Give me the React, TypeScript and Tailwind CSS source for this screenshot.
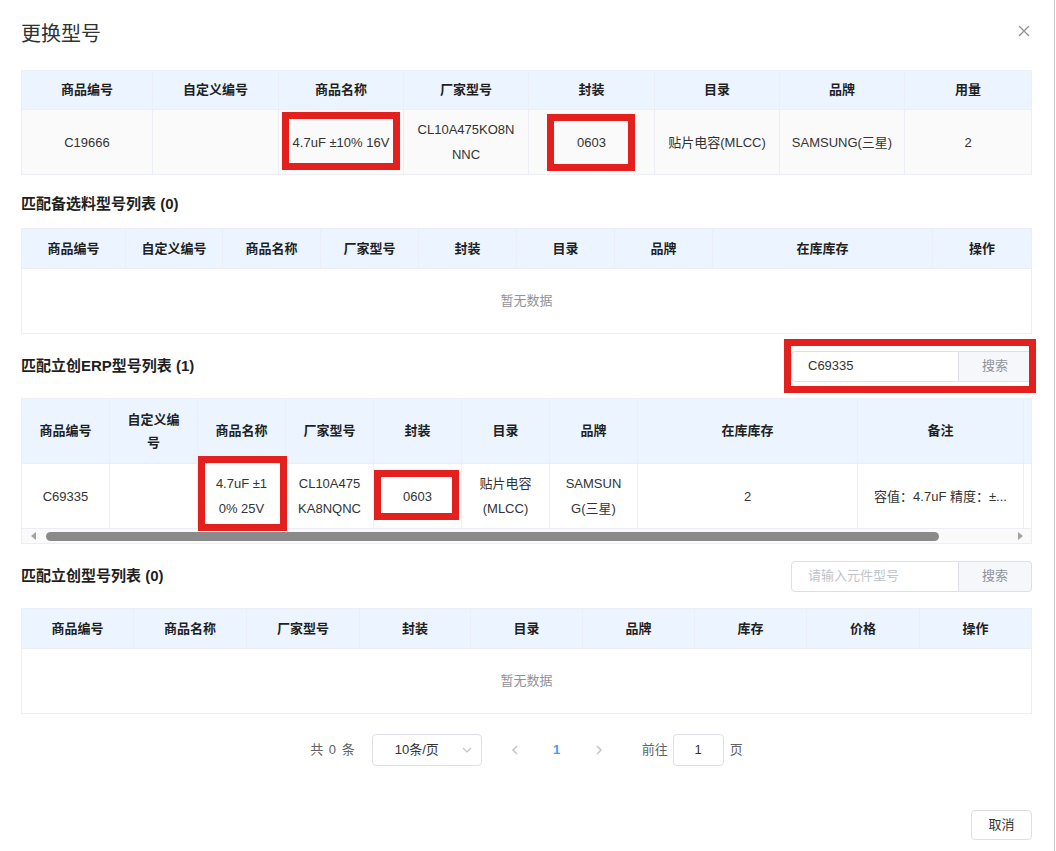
import React from "react";

const HB = "flex items-center justify-center border-r border-b border-[#ebeef5] bg-[#ecf5ff] font-bold text-[13px] text-[#1f1f1f] text-center";
const TD = "flex items-center justify-center border-r border-b border-[#ebeef5] text-[13px] text-[#333] text-center leading-[25px]";

function RedBox({ className }: { className: string }) {
  return <div className={"pointer-events-none absolute border-[7px] border-[#e4201f] " + className} />;
}

function SearchGroup({ value, placeholder, boxed }: { value?: string; placeholder?: string; boxed?: boolean }) {
  return (
    <div className="relative flex h-[31px] w-[241px]">
      <div className="flex flex-1 items-center rounded-l-[4px] border border-[#dcdfe6] px-[16px] text-[13px]">
        {value ? <span className="text-[#333]">{value}</span> : <span className="text-[#c0c4cc]">{placeholder}</span>}
      </div>
      <div className="flex w-[73px] items-center justify-center rounded-r-[4px] border border-l-0 border-[#dcdfe6] bg-[#f5f7fa] text-[13px] text-[#909399]">
        搜索
      </div>
      {boxed && <RedBox className="left-[-7px] top-[-12px] h-[54px] w-[252px]" />}
    </div>
  );
}

function SectionTitle({ children }: { children: React.ReactNode }) {
  return <div className="text-[15px] font-bold text-[#1f1f1f] leading-[22px]">{children}</div>;
}

export default function App() {
  const t1h = ["商品编号", "自定义编号", "商品名称", "厂家型号", "封装", "目录", "品牌", "用量"];
  const t2h = ["商品编号", "自定义编号", "商品名称", "厂家型号", "封装", "目录", "品牌", "在库库存", "操作"];
  const t4h = ["商品编号", "商品名称", "厂家型号", "封装", "目录", "品牌", "库存", "价格", "操作"];

  return (
    <div className="flex h-[851px] w-[1056px] overflow-hidden bg-white font-['Liberation_Sans','Noto_Sans_CJK_SC',sans-serif]">
      <div className="flex w-[1054px] flex-col pl-[21px] pr-[22px] pt-[22px]">
        {/* title */}
        <div className="flex h-[24px] items-center justify-between">
          <div className="text-[20px] leading-[24px] text-[#303133]">更换型号</div>
          <svg width="12" height="12" viewBox="0 0 12 12" className="mb-[6px] mr-[2px]">
            <path d="M1 1 L11 11 M11 1 L1 11" stroke="#909399" strokeWidth="1.3" />
          </svg>
        </div>

        {/* table 1 */}
        <div className="relative mt-[24px]">
          <div className="grid grid-cols-[131px_126px_125px_125px_126px_125px_125px_127px] border-l border-t border-[#ebeef5]">
            {t1h.map((h) => (
              <div key={h} className={HB + " h-[39px]"}>{h}</div>
            ))}
            <div className={TD + " h-[65px] bg-[#fafafa]"}>C19666</div>
            <div className={TD + " h-[65px] bg-[#fafafa]"}></div>
            <div className={TD + " h-[65px] bg-[#fafafa] whitespace-nowrap"}>4.7uF ±10% 16V</div>
            <div className={TD + " h-[65px] bg-[#fafafa] whitespace-nowrap"}>CL10A475KO8N<br />NNC</div>
            <div className={TD + " h-[65px] bg-[#fafafa]"}>0603</div>
            <div className={TD + " h-[65px] bg-[#fafafa] whitespace-nowrap"}>贴片电容(MLCC)</div>
            <div className={TD + " h-[65px] bg-[#fafafa] whitespace-nowrap"}>SAMSUNG(三星)</div>
            <div className={TD + " h-[65px] bg-[#fafafa]"}>2</div>
          </div>
          <RedBox className="left-[261px] top-[42px] h-[58px] w-[118px]" />
          <RedBox className="left-[526px] top-[44px] h-[57px] w-[88px]" />
        </div>

        {/* section 2 */}
        <div className="mt-[18px] mb-[13px]">
          <SectionTitle>匹配备选料型号列表 (0)</SectionTitle>
        </div>
        <div className="border-l border-t border-[#ebeef5]">
          <div className="grid grid-cols-[104px_97px_98px_98px_98px_98px_98px_220px_99px]">
            {t2h.map((h, i) => (
              <div key={i} className={HB + " h-[40px]"}>{h}</div>
            ))}
          </div>
          <div className="flex h-[65px] items-center justify-center border-r border-b border-[#ebeef5] text-[13px] text-[#909399]">
            暂无数据
          </div>
        </div>

        {/* section 3 */}
        <div className="flex h-[64px] items-center justify-between">
          <SectionTitle>匹配立创ERP型号列表 (1)</SectionTitle>
          <SearchGroup value="C69335" boxed />
        </div>
        <div className="relative">
          <div className="overflow-hidden border-l border-t border-r border-b border-[#ebeef5]">
            <div className="grid w-[1130px] grid-cols-[88px_88px_88px_88px_88px_88px_88px_220px_166px_148px]">
              <div className={HB + " h-[65px]"}>商品编号</div>
              <div className={HB + " h-[65px] leading-[23px]"}>自定义编<br />号</div>
              <div className={HB + " h-[65px]"}>商品名称</div>
              <div className={HB + " h-[65px]"}>厂家型号</div>
              <div className={HB + " h-[65px]"}>封装</div>
              <div className={HB + " h-[65px]"}>目录</div>
              <div className={HB + " h-[65px]"}>品牌</div>
              <div className={HB + " h-[65px]"}>在库库存</div>
              <div className={HB + " h-[65px]"}>备注</div>
              <div className={HB + " h-[65px]"}></div>

              <div className={TD + " h-[65px]"}>C69335</div>
              <div className={TD + " h-[65px]"}></div>
              <div className={TD + " h-[65px] whitespace-nowrap"}>4.7uF ±1<br />0% 25V</div>
              <div className={TD + " h-[65px] whitespace-nowrap"}>CL10A475<br />KA8NQNC</div>
              <div className={TD + " h-[65px]"}>0603</div>
              <div className={TD + " h-[65px] whitespace-nowrap"}>贴片电容<br />(MLCC)</div>
              <div className={TD + " h-[65px] whitespace-nowrap"}>SAMSUN<br />G(三星)</div>
              <div className={TD + " h-[65px]"}>2</div>
              <div className={TD + " h-[65px] whitespace-nowrap"}>容值：4.7uF 精度：±...</div>
              <div className={TD + " h-[65px]"}></div>
            </div>
            {/* fake scrollbar */}
            <div className="flex h-[14px] items-center bg-[#fafafa]">
              <div className="ml-[9px] h-0 w-0 border-y-[4px] border-r-[5px] border-y-transparent border-r-[#a3a3a3]" />
              <div className="ml-[10px] h-[9px] w-[893px] rounded-full bg-[#8a8a8a]" />
              <div className="flex-1" />
              <div className="mr-[8px] h-0 w-0 border-y-[4px] border-l-[5px] border-y-transparent border-l-[#a3a3a3]" />
            </div>
          </div>
          <RedBox className="left-[177px] top-[58px] h-[75px] w-[89px]" />
          <RedBox className="left-[353px] top-[72px] h-[50px] w-[85px]" />
        </div>

        {/* section 4 */}
        <div className="flex h-[64px] items-center justify-between">
          <SectionTitle>匹配立创型号列表 (0)</SectionTitle>
          <SearchGroup placeholder="请输入元件型号" />
        </div>
        <div className="border-l border-t border-[#ebeef5]">
          <div className="grid grid-cols-[112px_113px_113px_111px_112px_112px_112px_113px_112px]">
            {t4h.map((h, i) => (
              <div key={i} className={HB + " h-[40px]"}>{h}</div>
            ))}
          </div>
          <div className="flex h-[65px] items-center justify-center border-r border-b border-[#ebeef5] text-[13px] text-[#909399]">
            暂无数据
          </div>
        </div>

        {/* pagination */}
        <div className="mt-[20px] flex h-[32px] items-center justify-center text-[13px] text-[#606266]">
          <span className="mr-[16px] tracking-[1px]">共 0 条</span>
          <div className="flex h-[32px] w-[110px] items-center rounded-[4px] border border-[#dcdfe6] pl-[22px] pr-[8px]">
            <span className="flex-1 text-[#333]">10条/页</span>
            <svg width="12" height="12" viewBox="0 0 12 12">
              <path d="M2 4 L6 8 L10 4" fill="none" stroke="#c0c4cc" strokeWidth="1.2" />
            </svg>
          </div>
          <div className="ml-[17px] flex h-[32px] w-[32px] items-center justify-center">
            <svg width="12" height="12" viewBox="0 0 12 12">
              <path d="M8 2 L4 6 L8 10" fill="none" stroke="#c0c4cc" strokeWidth="1.5" />
            </svg>
          </div>
          <div className="ml-[8px] flex h-[32px] w-[36px] items-center justify-center font-bold text-[#409eff]">1</div>
          <div className="ml-[8px] flex h-[32px] w-[32px] items-center justify-center">
            <svg width="12" height="12" viewBox="0 0 12 12">
              <path d="M4 2 L8 6 L4 10" fill="none" stroke="#c0c4cc" strokeWidth="1.5" />
            </svg>
          </div>
          <span className="ml-[27px]">前往</span>
          <div className="ml-[5px] flex h-[32px] w-[51px] items-center justify-center rounded-[4px] border border-[#dcdfe6] text-[#333]">1</div>
          <span className="ml-[6px]">页</span>
        </div>

        {/* footer */}
        <div className="mt-[44px] flex justify-end">
          <div className="flex h-[30px] w-[61px] items-center justify-center rounded-[4px] border border-[#dcdfe6] text-[13px] text-[#333]">
            取消
          </div>
        </div>
      </div>
      <div className="w-[1px] bg-[#c8c8c8]" />
      <div className="w-[1px] bg-white" />
    </div>
  );
}
